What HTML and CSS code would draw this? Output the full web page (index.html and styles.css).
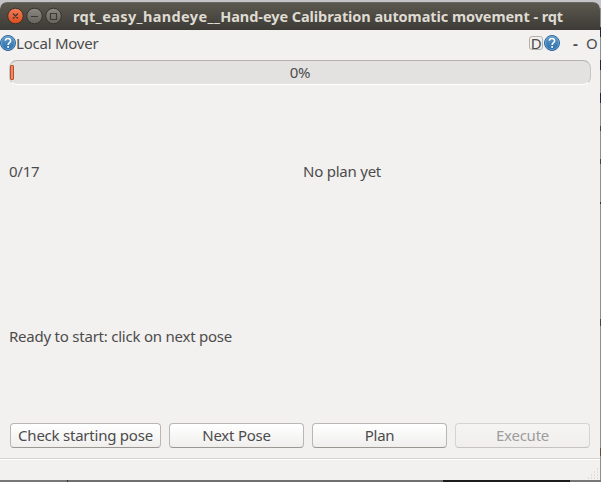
FILE: index.html
```html
<!DOCTYPE html>
<html lang="en">
<head>
<meta charset="utf-8">
<title>rqt</title>
<link rel="stylesheet" href="styles.css">
</head>
<body>
<svg width="0" height="0" class="defs">
  <defs>
    <linearGradient id="blue" x1="0" y1="0" x2="0" y2="1"><stop offset="0" stop-color="#5e9acb"/><stop offset="1" stop-color="#2d6fac"/></linearGradient>
    <linearGradient id="red" x1="0" y1="0" x2="0" y2="1"><stop offset="0" stop-color="#f47d56"/><stop offset="1" stop-color="#dd4a1c"/></linearGradient>
    <linearGradient id="grey" x1="0" y1="0" x2="0" y2="1"><stop offset="0" stop-color="#8b8982"/><stop offset="1" stop-color="#65635c"/></linearGradient>
    <symbol id="help" viewBox="0 0 16 16">
      <circle cx="8" cy="8" r="7.5" fill="url(#blue)" stroke="#2d659b"/>
      <circle cx="8" cy="8" r="6.6" fill="none" stroke="#85b2d8" stroke-width=".6"/>
      <path d="M5.4 5.7C5.5 2.9 10.7 2.8 10.6 5.9C10.6 7.7 8.1 7.7 8.1 10" fill="none" stroke="#fff" stroke-width="1.5"/>
      <circle cx="8.1" cy="12.1" r="1" fill="#fff"/>
    </symbol>
  </defs>
</svg>
<div class="window">
  <header class="titlebar">
    <svg class="controls" width="56" height="18" viewBox="0 0 56 18">
      <g stroke="#34332e">
        <circle cx="9.5" cy="9" r="7.8" fill="url(#red)"/>
        <circle cx="28.5" cy="9" r="7.8" fill="url(#grey)"/>
        <circle cx="47.5" cy="9" r="7.8" fill="url(#grey)"/>
      </g>
      <g fill="none" stroke="#3d3a33" stroke-width="1.2">
        <path d="M7 6.5l5 5M12 6.5l-5 5M25 9.5h7M44.5 6.5h6v6h-6z"/>
      </g>
    </svg>
    <h1 class="title"><span class="node">rqt_easy_handeye__</span>Hand-eye Calibration automatic movement - rqt</h1>
  </header>
  <div class="dockbar">
    <svg width="16" height="16"><use href="#help"/></svg>
    <span class="name">Local Mover</span>
    <span class="dock">D</span>
    <svg width="16" height="16"><use href="#help"/></svg>
    <span class="dash">-</span>
    <span class="close">O</span>
  </div>
  <main class="content">
    <div class="progress"><i class="chunk"></i><span>0%</span></div>
    <div class="status"><span class="count">0/17</span><span class="plan">No plan yet</span></div>
    <div class="message"><span>Ready to start: click on next pose</span></div>
    <div class="buttons">
      <button class="check">Check starting pose</button>
      <button class="next">Next Pose</button>
      <button>Plan</button>
      <button disabled>Execute</button>
    </div>
  </main>
  <footer class="statusbar">
    <svg width="12" height="12" viewBox="0 0 12 12"><path d="M9 1h1M6 4h1M9 4h1M3 7h1M6 7h1M9 7h1M0 10h1M3 10h1M6 10h1M9 10h1" stroke="#cbc8c5" stroke-width="1"/></svg>
  </footer>
</div>
</body>
</html>
```
FILE: styles.css
```css
* { box-sizing: border-box; }
body {
  margin: 0;
  width: 601px;
  height: 482px;
  padding: 2px 1px 2px 0;
  overflow: hidden;
  font: 15px/20px "Noto Sans", sans-serif;
  letter-spacing: -0.23px;
  color: #4c4c4c;
  background:
    linear-gradient(#c5c4c8, #c5c4c8) 0 0 / 601px 8px no-repeat,
    linear-gradient(90deg, #777 0 67px, #333 67px 68px, #707070 68px 443px, #1c1c1c 443px 570px, #777 570px) 0 480px / 601px 2px no-repeat,
    linear-gradient(#8e8f91 0 27px, #27283a 27px 37px, #8e8f91 37px 60px, #27283a 60px 70px, #8e8f91 70px 93px, #27283a 93px 103px, #8e8f91 103px 126px, #444 126px 131px, #8e8f91 131px 159px, #444 159px 164px, #8e8f91 164px 202px, #333 202px 204px, #8e8f91 204px 319px, #444 319px 326px, #8e8f91 326px 448px, #6b4a38 448px 456px, #8e8f91 456px);
}
.defs { position: absolute; }
.window {
  height: 478px;
  display: flex;
  flex-direction: column;
  background: #f2f1f0;
  border-radius: 7px 7px 0 0;
  overflow: hidden;
}
.titlebar {
  height: 28px;
  display: flex;
  align-items: center;
  padding-left: 6px;
  padding-bottom: 1px;
  background: linear-gradient(#5b584f, #3d3b36);
  border-top: 1px solid #6b685f;
}
.title {
  margin: 0 0 0 11px;
  font-size: 14.5px;
  line-height: 20px;
  font-weight: 700;
  letter-spacing: -0.07px;
  color: #dfdbd2;
  white-space: nowrap;
}
.node { letter-spacing: 0.38px; }
.dockbar { height: 30px; display: flex; align-items: center; padding-bottom: 4px; }
.name { flex: 1; margin-top: -1px; }
.dock {
  width: 14px;
  height: 14px;
  margin-right: 1px;
  border: 1px solid #b5b1aa;
  border-radius: 3px;
  line-height: 12px;
  text-align: center;
}
.dash { margin-left: 13px; font-weight: 700; width: 13px; }
.close { width: 14px; }
.content { flex: 1; display: flex; flex-direction: column; padding: 0 9px; }
.progress {
  height: 25px;
  display: flex;
  align-items: center;
  border: 1px solid #c8c5c1;
  border-top-color: #b5b2ae;
  border-bottom-color: #fff;
  border-radius: 8px;
  background: #e4e2e0;
}
.progress span { flex: 1; text-align: center; margin-right: 4px; padding-bottom: 2px; }
.chunk { width: 4px; height: 15px; border: 1px solid #b9502e; border-radius: 1px; background: #f08763; }
.status { height: 172px; display: grid; grid-template-columns: 294px 1fr; align-items: center; }
.message { height: 158px; display: flex; align-items: center; }
.buttons { display: grid; grid-template-columns: 153px 137px 137px 137px; column-gap: 6px; height: 26px; margin-top: auto; margin-bottom: 9px; }
button {
  height: 25px;
  margin: 0 1px;
  padding: 0;
  font: inherit;
  letter-spacing: inherit;
  line-height: 23px;
  color: #4c4c4c;
  border: 1px solid #bab7b3;
  border-bottom-color: #9b9894;
  border-radius: 4px;
  background: linear-gradient(#fff, #f0efee);
  white-space: nowrap;
}
button:disabled { color: #9d9d9d; border-color: #d6d4d1; border-bottom-color: #c5c2bf; background: linear-gradient(#f5f4f3, #f0efee); }
.statusbar {
  height: 22px;
  display: flex;
  justify-content: flex-end;
  align-items: flex-end;
  border-top: 1px solid #d5d2cf;
  box-shadow: inset 0 1px #fff;
}
```
